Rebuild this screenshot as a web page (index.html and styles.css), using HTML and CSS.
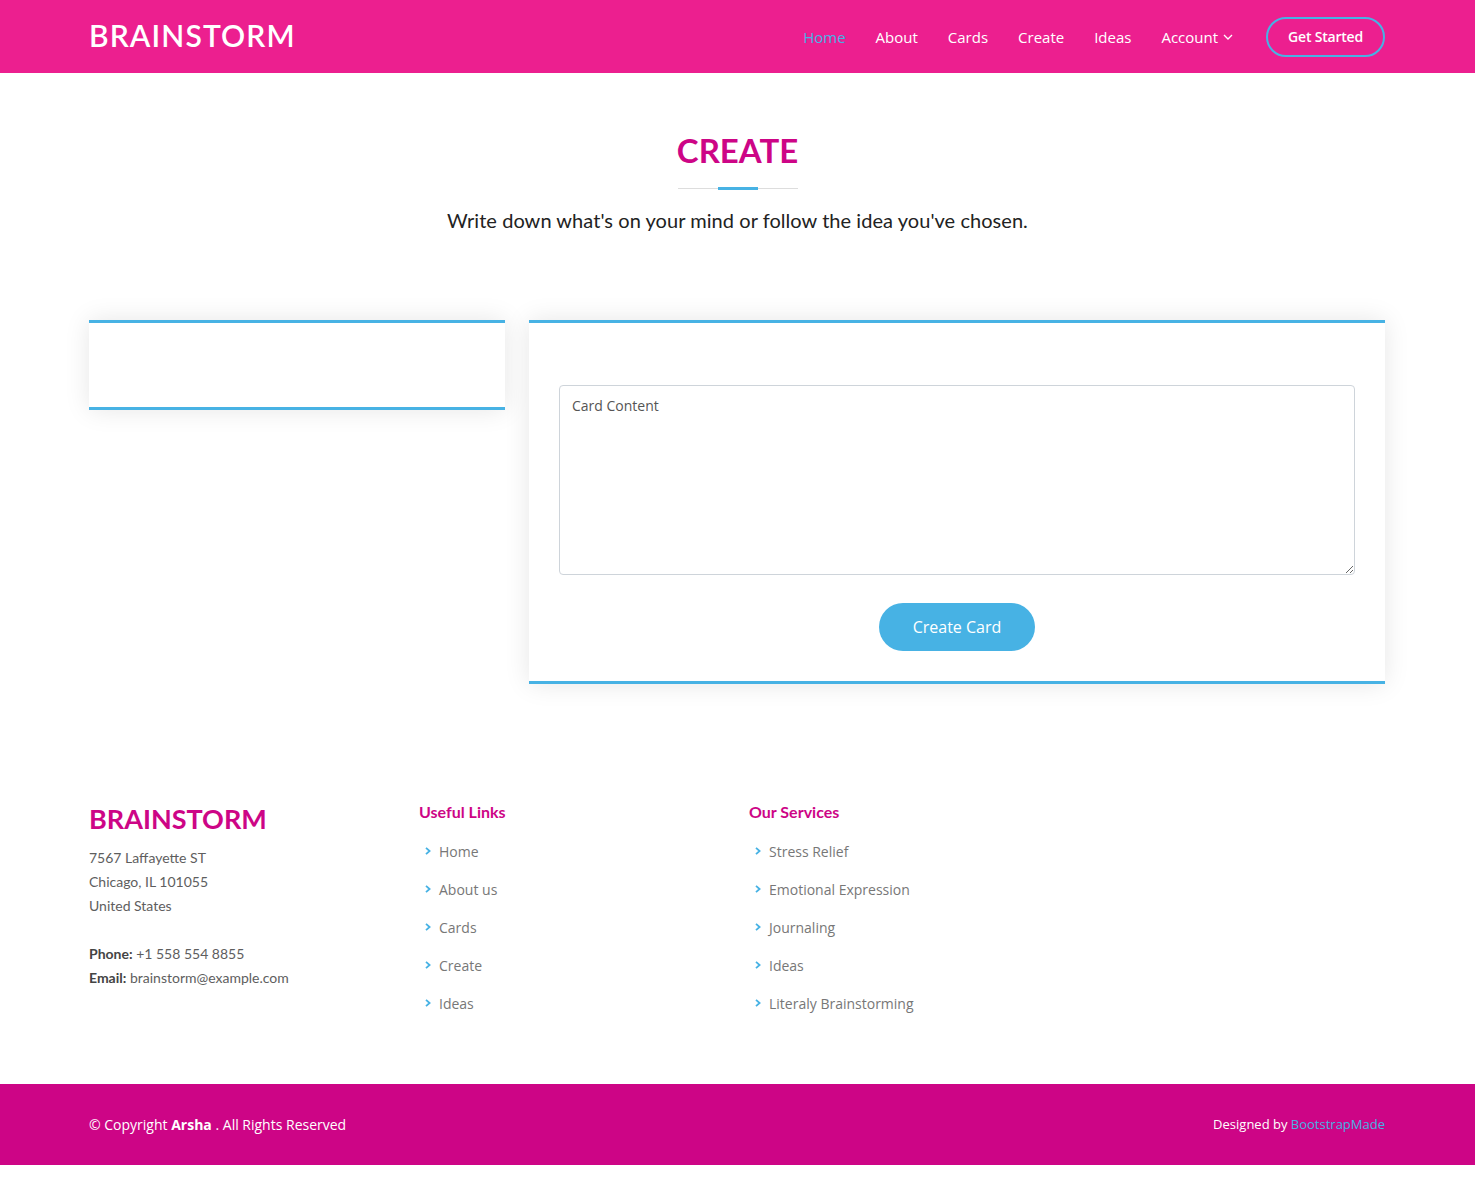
FILE: index.html
```html
<!DOCTYPE html>
<html lang="en">
<head>
<meta charset="utf-8">
<title>Create - Brainstorm</title>
<link rel="stylesheet" href="styles.css">
</head>
<body>
<header class="header">
  <div class="container header-inner">
    <a class="logo" href="#">BRAINSTORM</a>
    <nav class="nav">
      <a class="nav-link active" href="#">Home</a>
      <a class="nav-link" href="#">About</a>
      <a class="nav-link" href="#">Cards</a>
      <a class="nav-link" href="#">Create</a>
      <a class="nav-link" href="#">Ideas</a>
      <a class="nav-link dropdown" href="#">Account
        <svg class="chev-down" width="12" height="12" viewBox="0 0 12 12"><polyline points="2,4 6,8 10,4" fill="none" stroke="#fff" stroke-width="1.3"/></svg>
      </a>
      <a class="get-started" href="#">Get Started</a>
    </nav>
  </div>
</header>

<main>
  <section class="section-title">
    <h2>Create</h2>
    <p>Write down what's on your mind or follow the idea you've chosen.</p>
  </section>

  <section class="container create-row">
    <div class="card card-side"></div>
    <div class="card card-form">
      <form class="form">
        <textarea class="textarea" placeholder="Card Content"></textarea>
        <button class="btn-create" type="button">Create Card</button>
      </form>
    </div>
  </section>
</main>

<footer class="footer">
  <div class="container footer-top">
    <div class="footer-col">
      <h3 class="footer-logo">BRAINSTORM</h3>
      <p class="address">7567 Laffayette ST<br>Chicago, IL 101055<br>United States<br><br><strong>Phone:</strong> +1 558 554 8855<br><strong>Email:</strong> brainstorm@example.com</p>
    </div>
    <div class="footer-col">
      <h4>Useful Links</h4>
      <ul class="links">
        <li><svg class="chev" viewBox="0 0 8 10"><polyline points="2,1.8 5.6,5 2,8.2" fill="none" stroke="#47b2e4" stroke-width="1.8"/></svg><a href="#">Home</a></li>
        <li><svg class="chev" viewBox="0 0 8 10"><polyline points="2,1.8 5.6,5 2,8.2" fill="none" stroke="#47b2e4" stroke-width="1.8"/></svg><a href="#">About us</a></li>
        <li><svg class="chev" viewBox="0 0 8 10"><polyline points="2,1.8 5.6,5 2,8.2" fill="none" stroke="#47b2e4" stroke-width="1.8"/></svg><a href="#">Cards</a></li>
        <li><svg class="chev" viewBox="0 0 8 10"><polyline points="2,1.8 5.6,5 2,8.2" fill="none" stroke="#47b2e4" stroke-width="1.8"/></svg><a href="#">Create</a></li>
        <li><svg class="chev" viewBox="0 0 8 10"><polyline points="2,1.8 5.6,5 2,8.2" fill="none" stroke="#47b2e4" stroke-width="1.8"/></svg><a href="#">Ideas</a></li>
      </ul>
    </div>
    <div class="footer-col">
      <h4>Our Services</h4>
      <ul class="links">
        <li><svg class="chev" viewBox="0 0 8 10"><polyline points="2,1.8 5.6,5 2,8.2" fill="none" stroke="#47b2e4" stroke-width="1.8"/></svg><a href="#">Stress Relief</a></li>
        <li><svg class="chev" viewBox="0 0 8 10"><polyline points="2,1.8 5.6,5 2,8.2" fill="none" stroke="#47b2e4" stroke-width="1.8"/></svg><a href="#">Emotional Expression</a></li>
        <li><svg class="chev" viewBox="0 0 8 10"><polyline points="2,1.8 5.6,5 2,8.2" fill="none" stroke="#47b2e4" stroke-width="1.8"/></svg><a href="#">Journaling</a></li>
        <li><svg class="chev" viewBox="0 0 8 10"><polyline points="2,1.8 5.6,5 2,8.2" fill="none" stroke="#47b2e4" stroke-width="1.8"/></svg><a href="#">Ideas</a></li>
        <li><svg class="chev" viewBox="0 0 8 10"><polyline points="2,1.8 5.6,5 2,8.2" fill="none" stroke="#47b2e4" stroke-width="1.8"/></svg><a href="#">Literaly Brainstorming</a></li>
      </ul>
    </div>
    <div class="footer-col"></div>
  </div>
  <div class="footer-bottom">
    <div class="container bottom-inner">
      <div class="copyright">© Copyright <strong>Arsha</strong> . All Rights Reserved</div>
      <div class="credits">Designed by <a href="#">BootstrapMade</a></div>
    </div>
  </div>
</footer>
</body>
</html>
```
FILE: styles.css
```css
* { box-sizing: border-box; }
html, body { margin: 0; padding: 0; }
body {
  font-family: "Open Sans", "Liberation Sans", sans-serif;
  color: #444;
  background: #fff;
}
a { text-decoration: none; }

.container {
  width: 1321px;
  margin: 0 auto;
  padding: 0 13px 0 12px;
}

/* Header */
.header {
  background: #ec1f8f;
  height: 73px;
}
.header-inner {
  display: flex;
  align-items: center;
  justify-content: space-between;
  height: 73px;
}
.logo {
  font-family: "Lato", "Liberation Sans", sans-serif;
  font-size: 30px;
  font-weight: 600;
  letter-spacing: 1.1px;
  color: #fff;
  margin-top: -3px;
}
.nav {
  display: flex;
  align-items: center;
  margin-top: 0;
}
.nav-link {
  font-family: "Open Sans", sans-serif;
  font-size: 15px;
  color: #fff;
  margin-left: 30px;
  display: flex;
  align-items: center;
  letter-spacing: 0;
}
.nav-link:first-child { margin-left: 0; }
.nav-link.active { color: #47b2e4; }
.chev-down { margin-left: 4px; }
.get-started {
  margin-left: 32px;
  font-size: 14px;
  font-weight: 600;
  color: #fff;
  border: 2px solid #47b2e4;
  border-radius: 50px;
  padding: 8px 20px 9px;
  letter-spacing: -0.2px;
}

/* Section title */
.section-title {
  text-align: center;
  padding-top: 57px;
}
.section-title h2 {
  font-family: "Lato", "Liberation Sans", sans-serif;
  font-size: 33px;
  font-weight: 700;
  text-transform: uppercase;
  color: #cd0586;
  margin: 0 0 16px;
  padding-bottom: 20px;
  position: relative;
  line-height: 40px;
}
.section-title h2::before {
  content: "";
  position: absolute;
  width: 120px;
  height: 1px;
  background: #ddd;
  bottom: 1px;
  left: calc(50% - 60px);
}
.section-title h2::after {
  content: "";
  position: absolute;
  width: 40px;
  height: 3px;
  background: #47b2e4;
  bottom: 0;
  left: calc(50% - 20px);
}
.section-title p {
  font-family: "Lato", "Liberation Sans", sans-serif;
  font-size: 20px;
  color: #222;
  margin: 0;
  line-height: 28px;
  letter-spacing: 0.05px;
}

/* Cards */
.create-row {
  display: flex;
  gap: 24px;
  align-items: flex-start;
  margin-top: 86px;
}
.card {
  background: #fff;
  border-top: 3px solid #47b2e4;
  border-bottom: 3px solid #47b2e4;
  box-shadow: 0 0 24px rgba(0, 0, 0, 0.1);
}
.card-side {
  width: 416px;
  height: 90px;
}
.card-form {
  width: 856px;
  padding: 62px 30px 30px;
}
.form {
  display: flex;
  flex-direction: column;
  align-items: center;
}
.textarea {
  width: 100%;
  height: 190px;
  border: 1px solid #ced4da;
  border-radius: 4px;
  padding: 10px 12px;
  font-family: "Open Sans", sans-serif;
  font-size: 14px;
  color: #444;
  resize: vertical;
  display: block;
}
.textarea::placeholder { color: #555; }
.btn-create {
  margin-top: 28px;
  width: 156px;
  height: 48px;
  border: none;
  border-radius: 50px;
  background: #47b2e4;
  color: #fff;
  font-family: "Open Sans", sans-serif;
  font-size: 16px;
}

/* Footer */
.footer { margin-top: 118px; }
.footer-top {
  display: grid;
  grid-template-columns: repeat(4, 1fr);
  column-gap: 24px;
  padding-bottom: 62px;
}
.footer-logo {
  font-family: "Lato", "Liberation Sans", sans-serif;
  font-size: 27px;
  font-weight: 700;
  color: #cd0586;
  margin: 0 0 10px;
  line-height: 34px;
  letter-spacing: 0;
}
.address {
  font-family: "Lato", "Liberation Sans", sans-serif;
  font-size: 14px;
  line-height: 24px;
  color: #5e5e5e;
  margin: 0;
}
.address strong { color: #444; }
.footer-col h4 {
  font-family: "Lato", "Liberation Sans", sans-serif;
  font-size: 16px;
  font-weight: 700;
  color: #cd0586;
  margin: 0 0 10px;
  line-height: 20px;
}
.links {
  list-style: none;
  margin: 0;
  padding: 0;
}
.links li {
  display: flex;
  align-items: center;
  height: 38px;
}
.chev {
  width: 8px;
  height: 10px;
  margin-left: 5px;
  margin-right: 7px;
}
.links a {
  font-size: 14px;
  color: #777;
}

.footer-bottom {
  background: #cd0586;
  height: 81px;
}
.bottom-inner {
  display: flex;
  align-items: center;
  justify-content: space-between;
  height: 81px;
}
.copyright {
  font-size: 14px;
  color: #fff;
  margin-top: 0;
}
.credits {
  font-size: 13px;
  color: #fff;
  margin-top: -2px;
}
.credits a { color: #47b2e4; }
```
